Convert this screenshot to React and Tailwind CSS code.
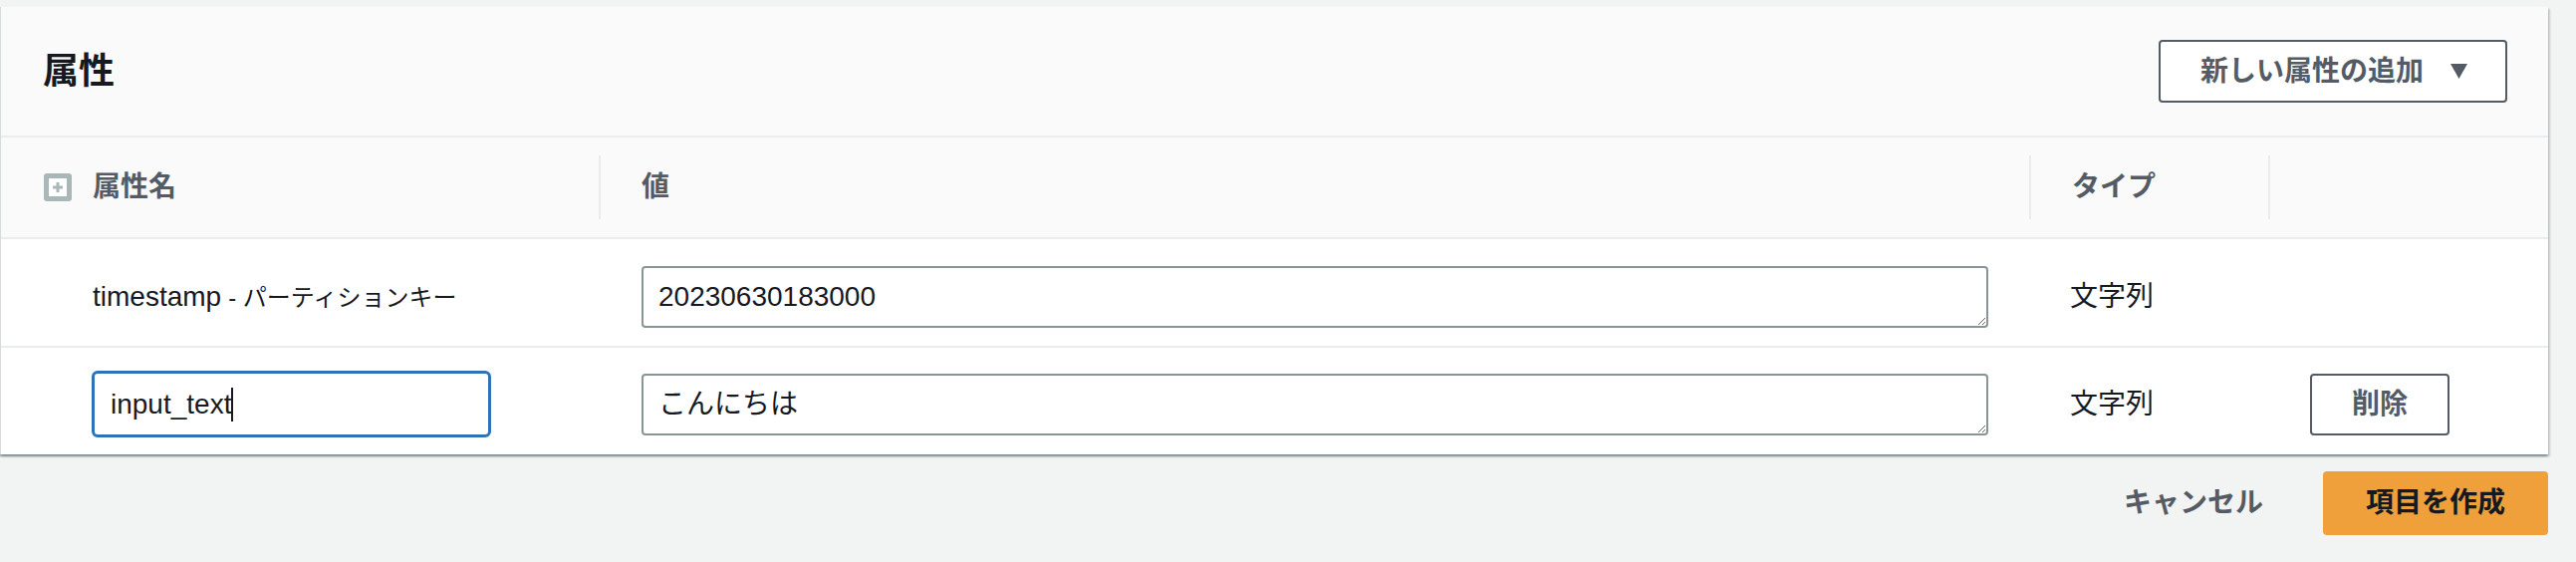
import React from "react";

function PlusBoxIcon() {
  return (
    <svg width="28" height="28" viewBox="0 0 28 28" aria-hidden="true">
      <rect x="0" y="0" width="28" height="28" rx="3" fill="#aab7b8" />
      <rect x="5" y="5" width="18" height="18" fill="#ffffff" />
      <rect x="12.5" y="9" width="3" height="10" fill="#aab7b8" />
      <rect x="9" y="12.5" width="10" height="3" fill="#aab7b8" />
    </svg>
  );
}

function Caret() {
  return (
    <svg width="17" height="15" viewBox="0 0 17 15" aria-hidden="true">
      <path d="M0 0 L17 0 L8.5 15 Z" fill="#545b64" />
    </svg>
  );
}

function HeaderDivider() {
  return <div className="h-[64px] w-[2px] shrink-0 bg-[#eaeded]" />;
}

function ValueArea({ value }) {
  return (
    <textarea
      readOnly
      defaultValue={value}
      className="block h-[62px] w-full rounded-[4px] border-2 border-[#879596] bg-white px-[15px] py-[8px] text-[28px] leading-[42px] text-[#16191f] outline-none"
    />
  );
}

export default function App() {
  return (
    <div className="min-h-[564px] w-[2586px] bg-[#f2f3f3] pt-[7px] pr-[28px] font-['Liberation_Sans','Noto_Sans_CJK_JP',sans-serif] text-[#16191f]">
      <div className="border-l border-[#d5dbdb] bg-white shadow-[0_2px_2px_0_rgba(0,28,36,0.3),2px_2px_2px_0_rgba(0,28,36,0.15),-2px_2px_2px_0_rgba(0,28,36,0.15)]">
        {/* Panel header */}
        <div className="flex h-[131px] items-center justify-between border-b-2 border-[#eaeded] bg-[#fafafa] pl-[42px] pr-[41px]">
          <h2 className="text-[36px] font-bold leading-[44px] text-[#16191f]">属性</h2>
          <button className="flex h-[63px] w-[350px] items-center justify-center gap-[27px] rounded-[4px] border-2 border-[#545b64] bg-white pl-[2px] text-[28px] font-bold leading-[36px] text-[#545b64]">
            <span>新しい属性の追加</span>
            <Caret />
          </button>
        </div>

        {/* Column header row */}
        <div className="grid h-[102px] grid-cols-[600px_1fr_240px_281px] border-b-2 border-[#eaeded] bg-[#fafafa] text-[28px] font-bold leading-[36px] text-[#545b64]">
          <div className="flex items-center pl-[43px]">
            <PlusBoxIcon />
            <span className="ml-[21px]">属性名</span>
          </div>
          <div className="flex items-center">
            <HeaderDivider />
            <span className="ml-[41px]">値</span>
          </div>
          <div className="flex items-center">
            <HeaderDivider />
            <span className="ml-[41px]">タイプ</span>
          </div>
          <div className="flex items-center">
            <HeaderDivider />
          </div>
        </div>

        {/* Row 1 */}
        <div className="grid grid-cols-[600px_1fr_240px_281px] items-center border-b-2 border-[#eaeded] pt-[27px] pb-[18px] text-[28px] leading-[36px]">
          <div className="flex items-baseline pl-[92px]">
            <span>timestamp</span>
            <span className="ml-[7px] text-[24px]">- パーティションキー</span>
          </div>
          <div className="pl-[43px] pr-[41px]">
            <ValueArea value="20230630183000" />
          </div>
          <div className="pl-[41px]">文字列</div>
          <div />
        </div>

        {/* Row 2 */}
        <div className="grid grid-cols-[600px_1fr_240px_281px] items-center pt-[23px] pb-[17px] text-[28px] leading-[36px]">
          <div className="pl-[91px]">
            <div className="flex h-[67px] w-[401px] items-center rounded-[6px] border-[3px] border-[#2e73b8] bg-white pl-[16px]">
              <span>input_text</span>
              <span className="h-[34px] w-[2px] bg-[#16191f]" />
            </div>
          </div>
          <div className="pl-[43px] pr-[41px]">
            <ValueArea value="こんにちは" />
          </div>
          <div className="pl-[41px]">文字列</div>
          <div className="pl-[42px]">
            <button className="flex h-[62px] w-[140px] items-center justify-center rounded-[4px] border-2 border-[#545b64] bg-white text-[28px] font-bold leading-[36px] text-[#545b64]">
              削除
            </button>
          </div>
        </div>
      </div>

      {/* Footer actions */}
      <div className="mt-[17px] flex items-center justify-end gap-[20px]">
        <button className="flex h-[64px] items-center px-[40px] text-[28px] font-bold leading-[36px] text-[#545b64]">
          キャンセル
        </button>
        <button className="flex h-[64px] w-[226px] items-center justify-center rounded-[4px] bg-[#f0a03b] text-[28px] font-bold leading-[36px] text-[#16191f]">
          項目を作成
        </button>
      </div>
    </div>
  );
}
